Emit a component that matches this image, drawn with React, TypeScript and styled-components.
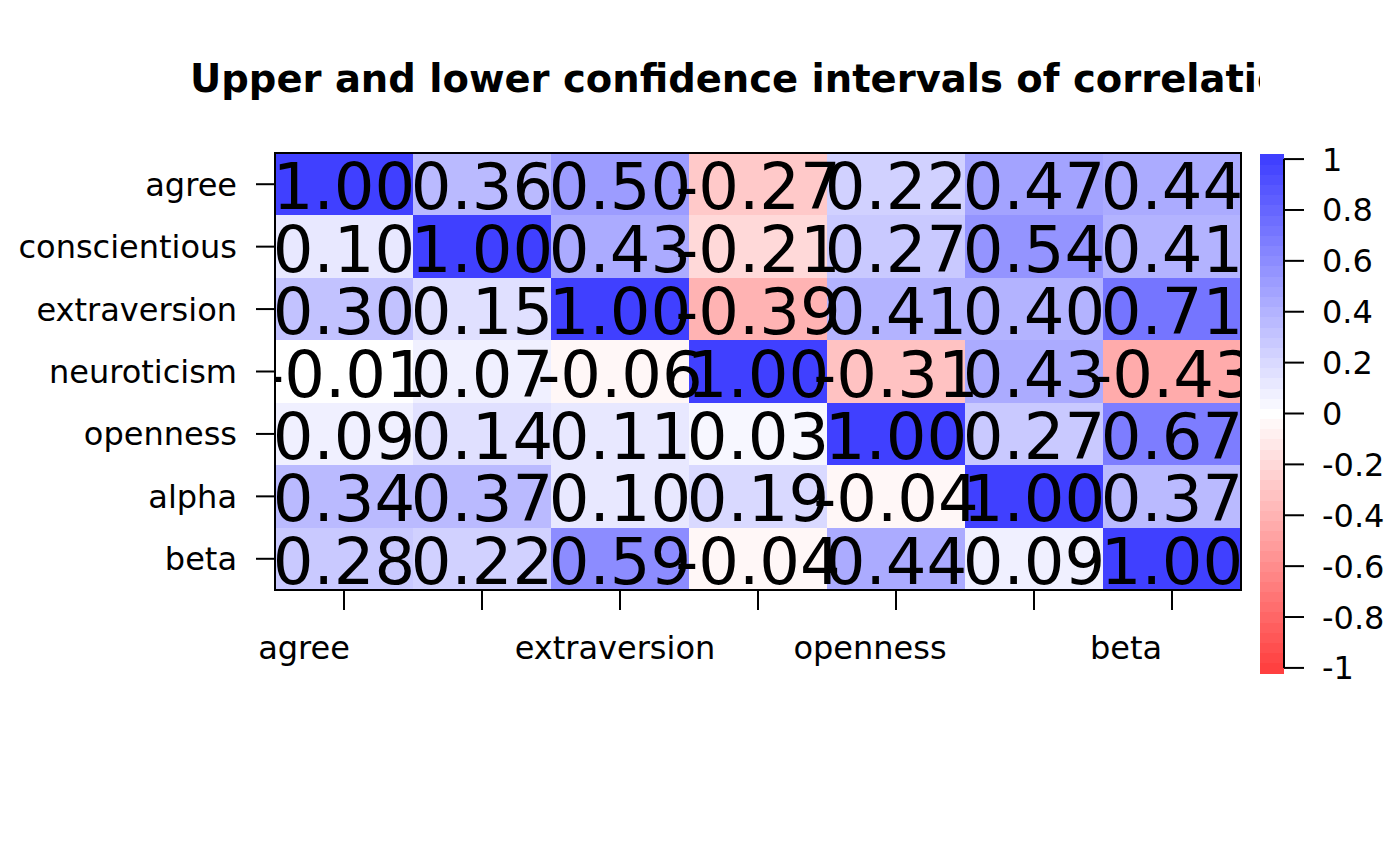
import styled, { createGlobalStyle } from "styled-components";

const GlobalStyle = createGlobalStyle`
  html, body {
    margin: 0;
    padding: 0;
    background: #ffffff;
  }
  body {
    font-family: "DejaVu Sans", "Liberation Sans", sans-serif;
  }
`;

const Page = styled.div`
  width: 1400px;
  height: 866px;
  display: flex;
  flex-direction: column;
  background: #ffffff;
  overflow: hidden;
`;

// the title is clipped by the plot's figure region, as in the R output
const TitleClip = styled.div`
  width: 1260px;
  height: 120px;
  overflow: hidden;
  box-sizing: border-box;
  padding: 60px 0 0 190px;
`;

const Title = styled.h1`
  margin: 0;
  font-family: "DejaVu Sans", sans-serif;
  font-size: 38.5px;
  line-height: 38px;
  font-weight: bold;
  white-space: nowrap;
  color: #000;
`;

const Chart = styled.svg`
  display: block;
  width: 1400px;
  height: 746px;
`;

const CellText = styled.text`
  font-family: "DejaVu Sans", sans-serif;
  font-size: 64px;
  fill: #000;
  text-anchor: middle;
`;

const AxisText = styled.text<{ $anchor: "start" | "middle" | "end" }>`
  font-family: "DejaVu Sans", sans-serif;
  font-size: 32px;
  fill: #000;
  text-anchor: ${(p) => p.$anchor};
`;

const vars = [
  "agree",
  "conscientious",
  "extraversion",
  "neuroticism",
  "openness",
  "alpha",
  "beta",
];

const values = [
  [1.0, 0.36, 0.5, -0.27, 0.22, 0.47, 0.44],
  [0.1, 1.0, 0.43, -0.21, 0.27, 0.54, 0.41],
  [0.3, 0.15, 1.0, -0.39, 0.41, 0.4, 0.71],
  [-0.01, 0.07, -0.06, 1.0, -0.31, 0.43, -0.43],
  [0.09, 0.14, 0.11, 0.03, 1.0, 0.27, 0.67],
  [0.34, 0.37, 0.1, 0.19, -0.04, 1.0, 0.37],
  [0.28, 0.22, 0.59, -0.04, 0.44, 0.09, 1.0],
];

// red - white - blue ramp with 51 steps, drawn at alpha .75 over white
function rampColor(k: number) {
  const t = k / 50;
  let r: number, g: number, b: number;
  if (t <= 0.5) {
    r = 255;
    g = b = 255 * (t / 0.5);
  } else {
    r = g = (255 * (1 - t)) / 0.5;
    b = 255;
  }
  const mix = (c: number) => Math.round(0.75 * c + 63.75);
  return `rgb(${mix(r)},${mix(g)},${mix(b)})`;
}

const cellColor = (v: number) => rampColor(Math.round((v + 1) * 25));

const fmt = (v: number) => v.toFixed(2);

const plot = { left: 275, top: 153, right: 1241, bottom: 590 };
const cellW = (plot.right - plot.left) / 7;
const cellH = (plot.bottom - plot.top) / 7;

const xLabels = [
  { text: "agree", x: 304 },
  { text: "extraversion", x: 615 },
  { text: "openness", x: 870 },
  { text: "beta", x: 1126 },
];

const bar = { left: 1260, right: 1284, top: 154, bottom: 673 };
const binH = (bar.bottom - bar.top) / 51;
const legendTicks = ["1", "0.8", "0.6", "0.4", "0.2", "0", "-0.2", "-0.4", "-0.6", "-0.8", "-1"];

export default function App() {
  return (
    <>
      <GlobalStyle />
      <Page>
        <TitleClip>
          <Title>Upper and lower confidence intervals of correlations</Title>
        </TitleClip>
        <Chart viewBox="0 120 1400 746">
          <defs>
            <clipPath id="plot-region">
              <rect
                x={plot.left}
                y={plot.top}
                width={plot.right - plot.left}
                height={plot.bottom - plot.top}
              />
            </clipPath>
          </defs>
          <g shapeRendering="crispEdges">
            {values.map((row, i) =>
              row.map((v, j) => (
                <rect
                  key={`c${i}-${j}`}
                  x={plot.left + j * cellW}
                  y={plot.top + i * cellH}
                  width={cellW + 0.5}
                  height={cellH + 0.5}
                  fill={cellColor(v)}
                />
              ))
            )}
          </g>
          <g clipPath="url(#plot-region)">
            {values.map((row, i) =>
              row.map((v, j) => (
                <CellText
                  key={`t${i}-${j}`}
                  x={plot.left + (j + 0.5) * cellW}
                  y={plot.top + (i + 0.5) * cellH + 25}
                >
                  {fmt(v)}
                </CellText>
              ))
            )}
          </g>
          <rect
            x={plot.left}
            y={plot.top}
            width={plot.right - plot.left}
            height={plot.bottom - plot.top}
            fill="none"
            stroke="#000"
            strokeWidth={2}
          />

          {vars.map((name, i) => {
            const cy = plot.top + (i + 0.5) * cellH;
            return (
              <g key={name}>
                <line x1={256} x2={plot.left} y1={cy} y2={cy} stroke="#000" strokeWidth={2} />
                <AxisText $anchor="end" x={237} y={cy + 11.5}>
                  {name}
                </AxisText>
              </g>
            );
          })}

          {vars.map((name, j) => {
            const cx = plot.left + (j + 0.5) * cellW;
            return (
              <line key={name} x1={cx} x2={cx} y1={plot.bottom} y2={610} stroke="#000" strokeWidth={2} />
            );
          })}
          {xLabels.map((l) => (
            <AxisText key={l.text} $anchor="middle" x={l.x} y={659}>
              {l.text}
            </AxisText>
          ))}

          <g shapeRendering="crispEdges">
            {Array.from({ length: 51 }, (_, k) => (
              <rect
                key={`b${k}`}
                x={bar.left}
                y={bar.top + (50 - k) * binH}
                width={bar.right - bar.left}
                height={binH + 0.5}
                fill={rampColor(k)}
              />
            ))}
          </g>
          <line
            x1={bar.right}
            x2={bar.right}
            y1={bar.top + binH / 2}
            y2={bar.bottom - binH / 2}
            stroke="#000"
            strokeWidth={2}
          />
          {legendTicks.map((label, k) => {
            const ty = bar.top + binH / 2 + k * 5 * binH;
            return (
              <g key={label}>
                <line x1={bar.right} x2={1304} y1={ty} y2={ty} stroke="#000" strokeWidth={2} />
                <AxisText $anchor="start" x={1322} y={ty + 11.5}>
                  {label}
                </AxisText>
              </g>
            );
          })}
        </Chart>
      </Page>
    </>
  );
}
